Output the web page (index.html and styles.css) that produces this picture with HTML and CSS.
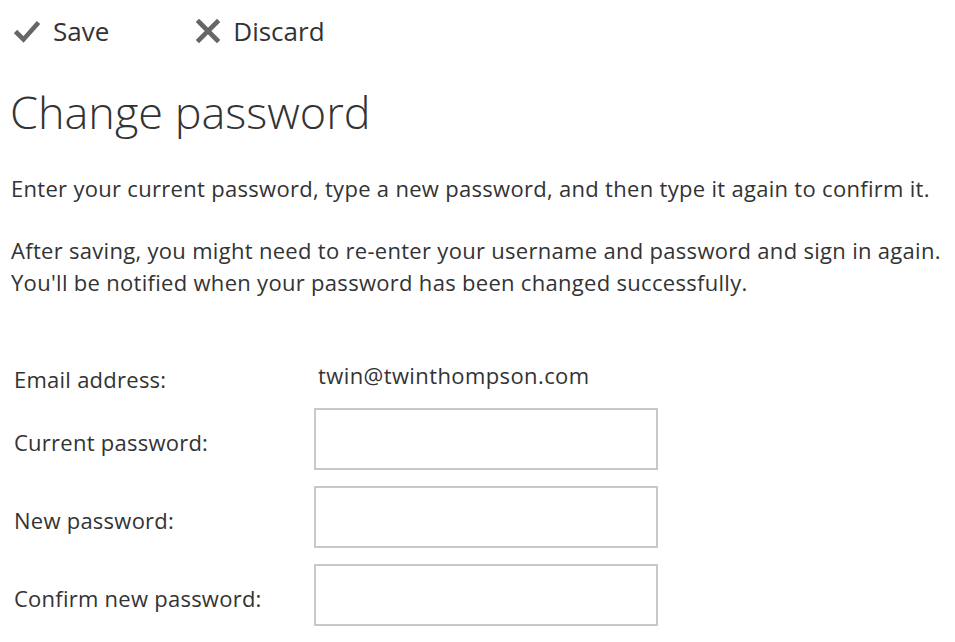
FILE: index.html
```html
<!DOCTYPE html>
<html lang="en">
<head>
    <meta charset="UTF-8">
    <meta name="viewport" content="width=device-width, initial-scale=1.0">
    <title>Change password</title>
    <link rel="stylesheet" href="styles.css">
</head>
<body>
    <div class="page">
        <div class="toolbar">
            <button type="button" class="tool">
                <svg class="icon" viewBox="0 0 26 22" width="26" height="22"><path d="M1.5 11.5 L9.5 19.5 L24.5 2.5" fill="none" stroke="#666" stroke-width="4.6"/></svg>
                <span>Save</span>
            </button>
            <button type="button" class="tool">
                <svg class="icon" viewBox="0 0 22 22" width="22" height="22"><path d="M2 2 L20 20 M20 2 L2 20" fill="none" stroke="#666" stroke-width="4.6" stroke-linecap="square"/></svg>
                <span>Discard</span>
            </button>
        </div>

        <h1>Change password</h1>

        <p class="info">Enter your current password, type a new password, and then type it again to confirm it.</p>
        <p class="info">After saving, you might need to re-enter your username and password and sign in again.<br>You'll be notified when your password has been changed successfully.</p>

        <form class="fields">
            <div class="row row-email">
                <label>Email address:</label>
                <span class="value">twin@twinthompson.com</span>
            </div>
            <div class="row">
                <label for="current">Current password:</label>
                <input type="password" id="current">
            </div>
            <div class="row">
                <label for="newpass">New password:</label>
                <input type="password" id="newpass">
            </div>
            <div class="row">
                <label for="confirm">Confirm new password:</label>
                <input type="password" id="confirm">
            </div>
        </form>
    </div>
</body>
</html>
```

FILE: styles.css
```css
body { margin: 0; padding: 0; background: #fff; color: #333; font-family: "Open Sans", "Noto Sans", sans-serif; }
.page { padding: 14px 0 0 10px; }
.toolbar { display: flex; gap: 88px; padding-left: 4px; height: 34px; }
.tool { display: flex; align-items: center; gap: 13px; background: none; border: none; padding: 0; font-family: inherit; font-size: 26px; color: #333; cursor: pointer; height: 34px; }
.tool + .tool { gap: 14px; }
.icon { display: block; overflow: visible; }
h1 { font-weight: 300; font-size: 45px; margin: 34px 0 0 0; line-height: 60px; color: #333; }
.info { font-size: 22px; letter-spacing: 0.3px; line-height: 32px; margin: 30px 0 0 1px; }
.fields { margin-top: 66px; padding-left: 4px; }
.row { display: flex; align-items: center; height: 62px; margin-bottom: 16px; }
.row label { width: 300px; font-size: 22px; letter-spacing: 0.25px; padding-top: 6px; }
.row-email { height: 30px; line-height: 30px; align-items: flex-start; margin-bottom: 14px; }
.row-email label { padding-top: 0; }
.row-email .value { font-size: 22px; letter-spacing: 0.4px; margin: -4px 0 0 4px; }
.row input { width: 340px; height: 58px; border: 2px solid #c8c8c8; padding: 0; margin: 0; box-sizing: content-box; }
```
